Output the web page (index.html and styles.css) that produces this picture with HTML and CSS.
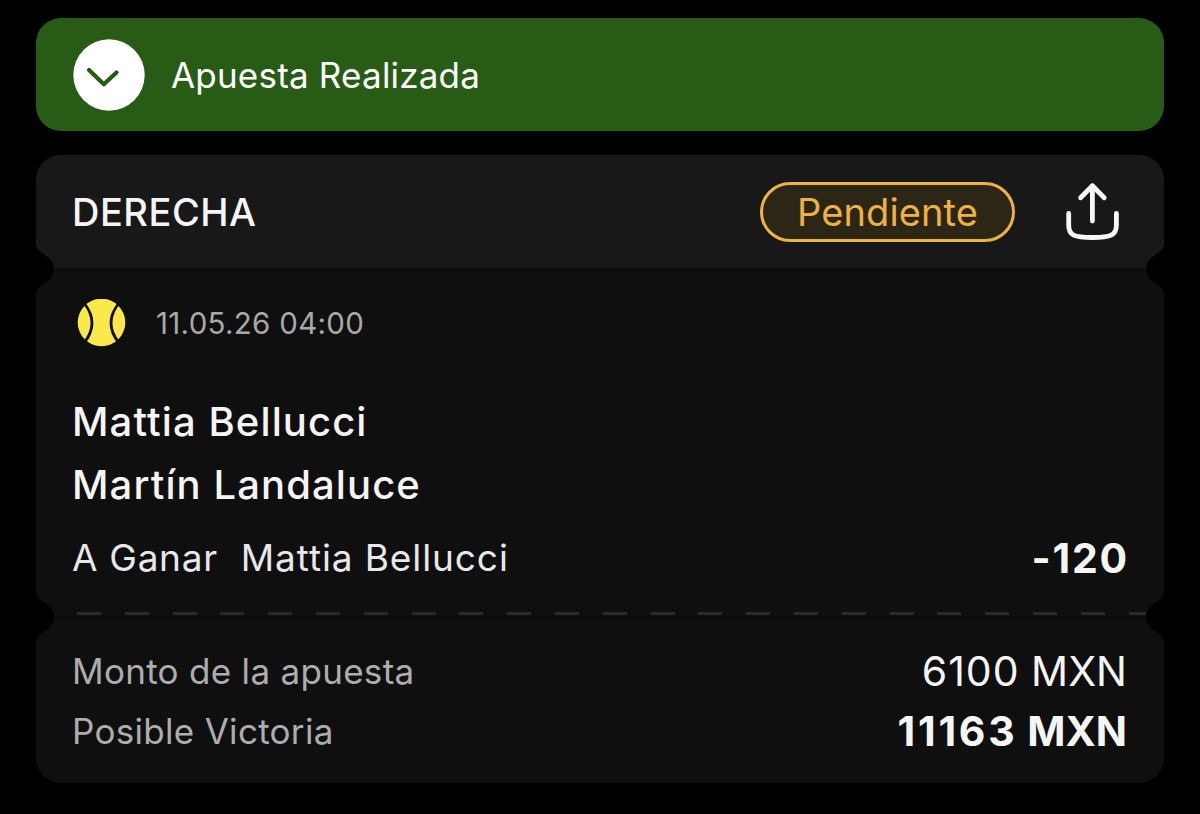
FILE: index.html
```html
<!DOCTYPE html>
<html lang="es">
<head>
    <meta charset="UTF-8">
    <title>Apuesta Realizada</title>
    <link rel="stylesheet" href="styles.css">
</head>
<body>
    <div class="banner">
        <svg class="banner-icon" viewBox="0 0 72 72">
            <circle cx="36" cy="36" r="35.7" fill="#fff"/>
            <path d="M16 31 L30.8 45.3 L43.5 33.5" fill="none" stroke="#285c16" stroke-width="4.2" stroke-linecap="round" stroke-linejoin="round"/>
        </svg>
        <span class="banner-text">Apuesta Realizada</span>
    </div>

    <div class="ticket">
        <div class="ticket-header">
            <span class="bet-type">DERECHA</span>
            <span class="status">Pendiente</span>
            <svg class="share" viewBox="0 0 56 60" fill="none" stroke="#f8f6f8" stroke-width="4.8" stroke-linecap="round" stroke-linejoin="round">
                <path d="M28.4 39 V4"/>
                <path d="M16.6 15.7 L28.4 3.8 L40.2 15.7"/>
                <path d="M4.7 31.5 V43 C4.7 53.5 10 55.5 28.4 55.5 C46.8 55.5 52.4 53.5 52.4 43 V31.5"/>
            </svg>
        </div>

        <div class="ticket-body">
            <svg class="notch notch-left" viewBox="0 0 18 54"><path d="M0 0 C0 7 3 9 9 13 C21 20 21 34 9 41 C3 45 0 47 0 54 Z"/></svg>
            <svg class="notch notch-right" viewBox="0 0 18 54"><path d="M0 0 C0 7 3 9 9 13 C21 20 21 34 9 41 C3 45 0 47 0 54 Z"/></svg>
            <div class="event-time">
                <svg class="ball" viewBox="0 0 48 48">
                    <circle cx="24" cy="23.5" r="23.8" fill="#fbe84b"/>
                    <path d="M6.5 4 Q22.5 24 6.5 44 M41.5 4 Q25.5 24 41.5 44" fill="none" stroke="#0f0f0f" stroke-width="2.8"/>
                </svg>
                <span class="date">11.05.26 04:00</span>
            </div>
            <div class="teams">
                <div class="team">Mattia Bellucci</div>
                <div class="team">Martín Landaluce</div>
            </div>
            <div class="outcome">
                <span class="market">A Ganar</span>
                <span class="selection">Mattia Bellucci</span>
                <span class="odds">-120</span>
            </div>
            <div class="divider"></div>
        </div>

        <div class="ticket-footer">
            <svg class="notch notch-left" viewBox="0 0 18 54"><path d="M0 0 C0 7 3 9 9 13 C21 20 21 34 9 41 C3 45 0 47 0 54 Z"/></svg>
            <svg class="notch notch-right" viewBox="0 0 18 54"><path d="M0 0 C0 7 3 9 9 13 C21 20 21 34 9 41 C3 45 0 47 0 54 Z"/></svg>
            <div class="summary-row">
                <span class="label">Monto de la apuesta</span>
                <span class="stake"><span class="amount">6100</span> MXN</span>
            </div>
            <div class="summary-row">
                <span class="label">Posible Victoria</span>
                <span class="win"><span class="amount">11163</span> MXN</span>
            </div>
        </div>
    </div>
</body>
</html>
```
FILE: styles.css
```css
* {
    box-sizing: border-box;
}

body {
    margin: 0;
    padding: 18px 36px;
    background-color: #000;
    color: #f5f5f5;
    font-family: Inter, Roboto, sans-serif;
    white-space: nowrap;
}

svg {
    display: block;
    flex-shrink: 0;
}

.banner {
    display: flex;
    align-items: center;
    height: 113px;
    padding: 0 37px;
    margin-bottom: 24px;
    background-color: #285c16;
    border-radius: 25px;
}

.banner-icon {
    width: 72px;
    height: 72px;
    margin-right: 26px;
}

.banner-text {
    font-size: 35px;
    letter-spacing: 0.2px;
    color: #fff;
}

.ticket {
    border-radius: 25px;
    overflow: hidden;
    background-color: #0f0f0f;
}

.ticket-header {
    display: flex;
    align-items: center;
    height: 113px;
    padding: 0 44px 0 36px;
    background-color: #181818;
}

.bet-type {
    font-size: 38px;
    font-weight: 500;
    letter-spacing: 0.5px;
    margin-right: auto;
}

.status {
    width: 255px;
    height: 60px;
    margin-right: 49px;
    border: 3px solid #eeb143;
    border-radius: 30px;
    background-color: #2c2616;
    color: #eeb143;
    font-size: 38px;
    line-height: 55px;
    letter-spacing: 0.1px;
    text-align: center;
}

.share {
    width: 56px;
    height: 60px;
}

.ticket-body {
    position: relative;
    height: 348px;
    padding: 30px 37px 0;
    border-top: 1px solid #0b0b0b;
}

.notch {
    position: absolute;
    top: -27px;
    width: 18px;
    height: 54px;
    fill: #000;
}

.notch-left {
    left: 0;
}

.notch-right {
    right: 0;
    transform: scaleX(-1);
}

.event-time {
    display: flex;
    align-items: center;
    height: 48px;
    padding-left: 4px;
}

.ball {
    width: 49px;
    height: 48px;
}

.date {
    margin-left: 30px;
    font-size: 29.5px;
    letter-spacing: 0.3px;
    color: #a9a9a9;
}

.teams {
    margin: 43px 0 0 -1px;
}

.team {
    font-size: 40px;
    font-weight: 500;
    line-height: 63px;
    letter-spacing: 1.1px;
}

.outcome {
    display: flex;
    align-items: center;
    height: 52px;
    margin-top: 15px;
    margin-left: -1px;
    font-size: 37px;
    letter-spacing: 0.9px;
    color: #e8e8e8;
}

.market {
    margin-right: 23px;
    letter-spacing: 0.7px;
}

.odds {
    margin-left: auto;
    margin-right: -2px;
    padding-top: 2px;
    font-size: 41px;
    font-weight: 700;
    letter-spacing: 1.8px;
    color: #f5f5f5;
}

.divider {
    height: 3px;
    margin: 29px -19px 0 4px;
    background: repeating-linear-gradient(to right, #2b2b2b 0 24px, transparent 24px 47.8px);
}

.ticket-footer {
    position: relative;
    height: 167px;
    padding: 24px 37px 0 36px;
    border-top: 1px solid #0b0b0b;
}

.summary-row {
    display: flex;
    align-items: center;
    justify-content: space-between;
    height: 60px;
}

.label {
    font-size: 35px;
    letter-spacing: 0.3px;
    color: #adadad;
}

.stake,
.win {
    font-size: 41px;
}

.stake .amount {
    letter-spacing: 1px;
}

.win {
    font-weight: 700;
}

.win .amount {
    letter-spacing: 2.8px;
}
```
